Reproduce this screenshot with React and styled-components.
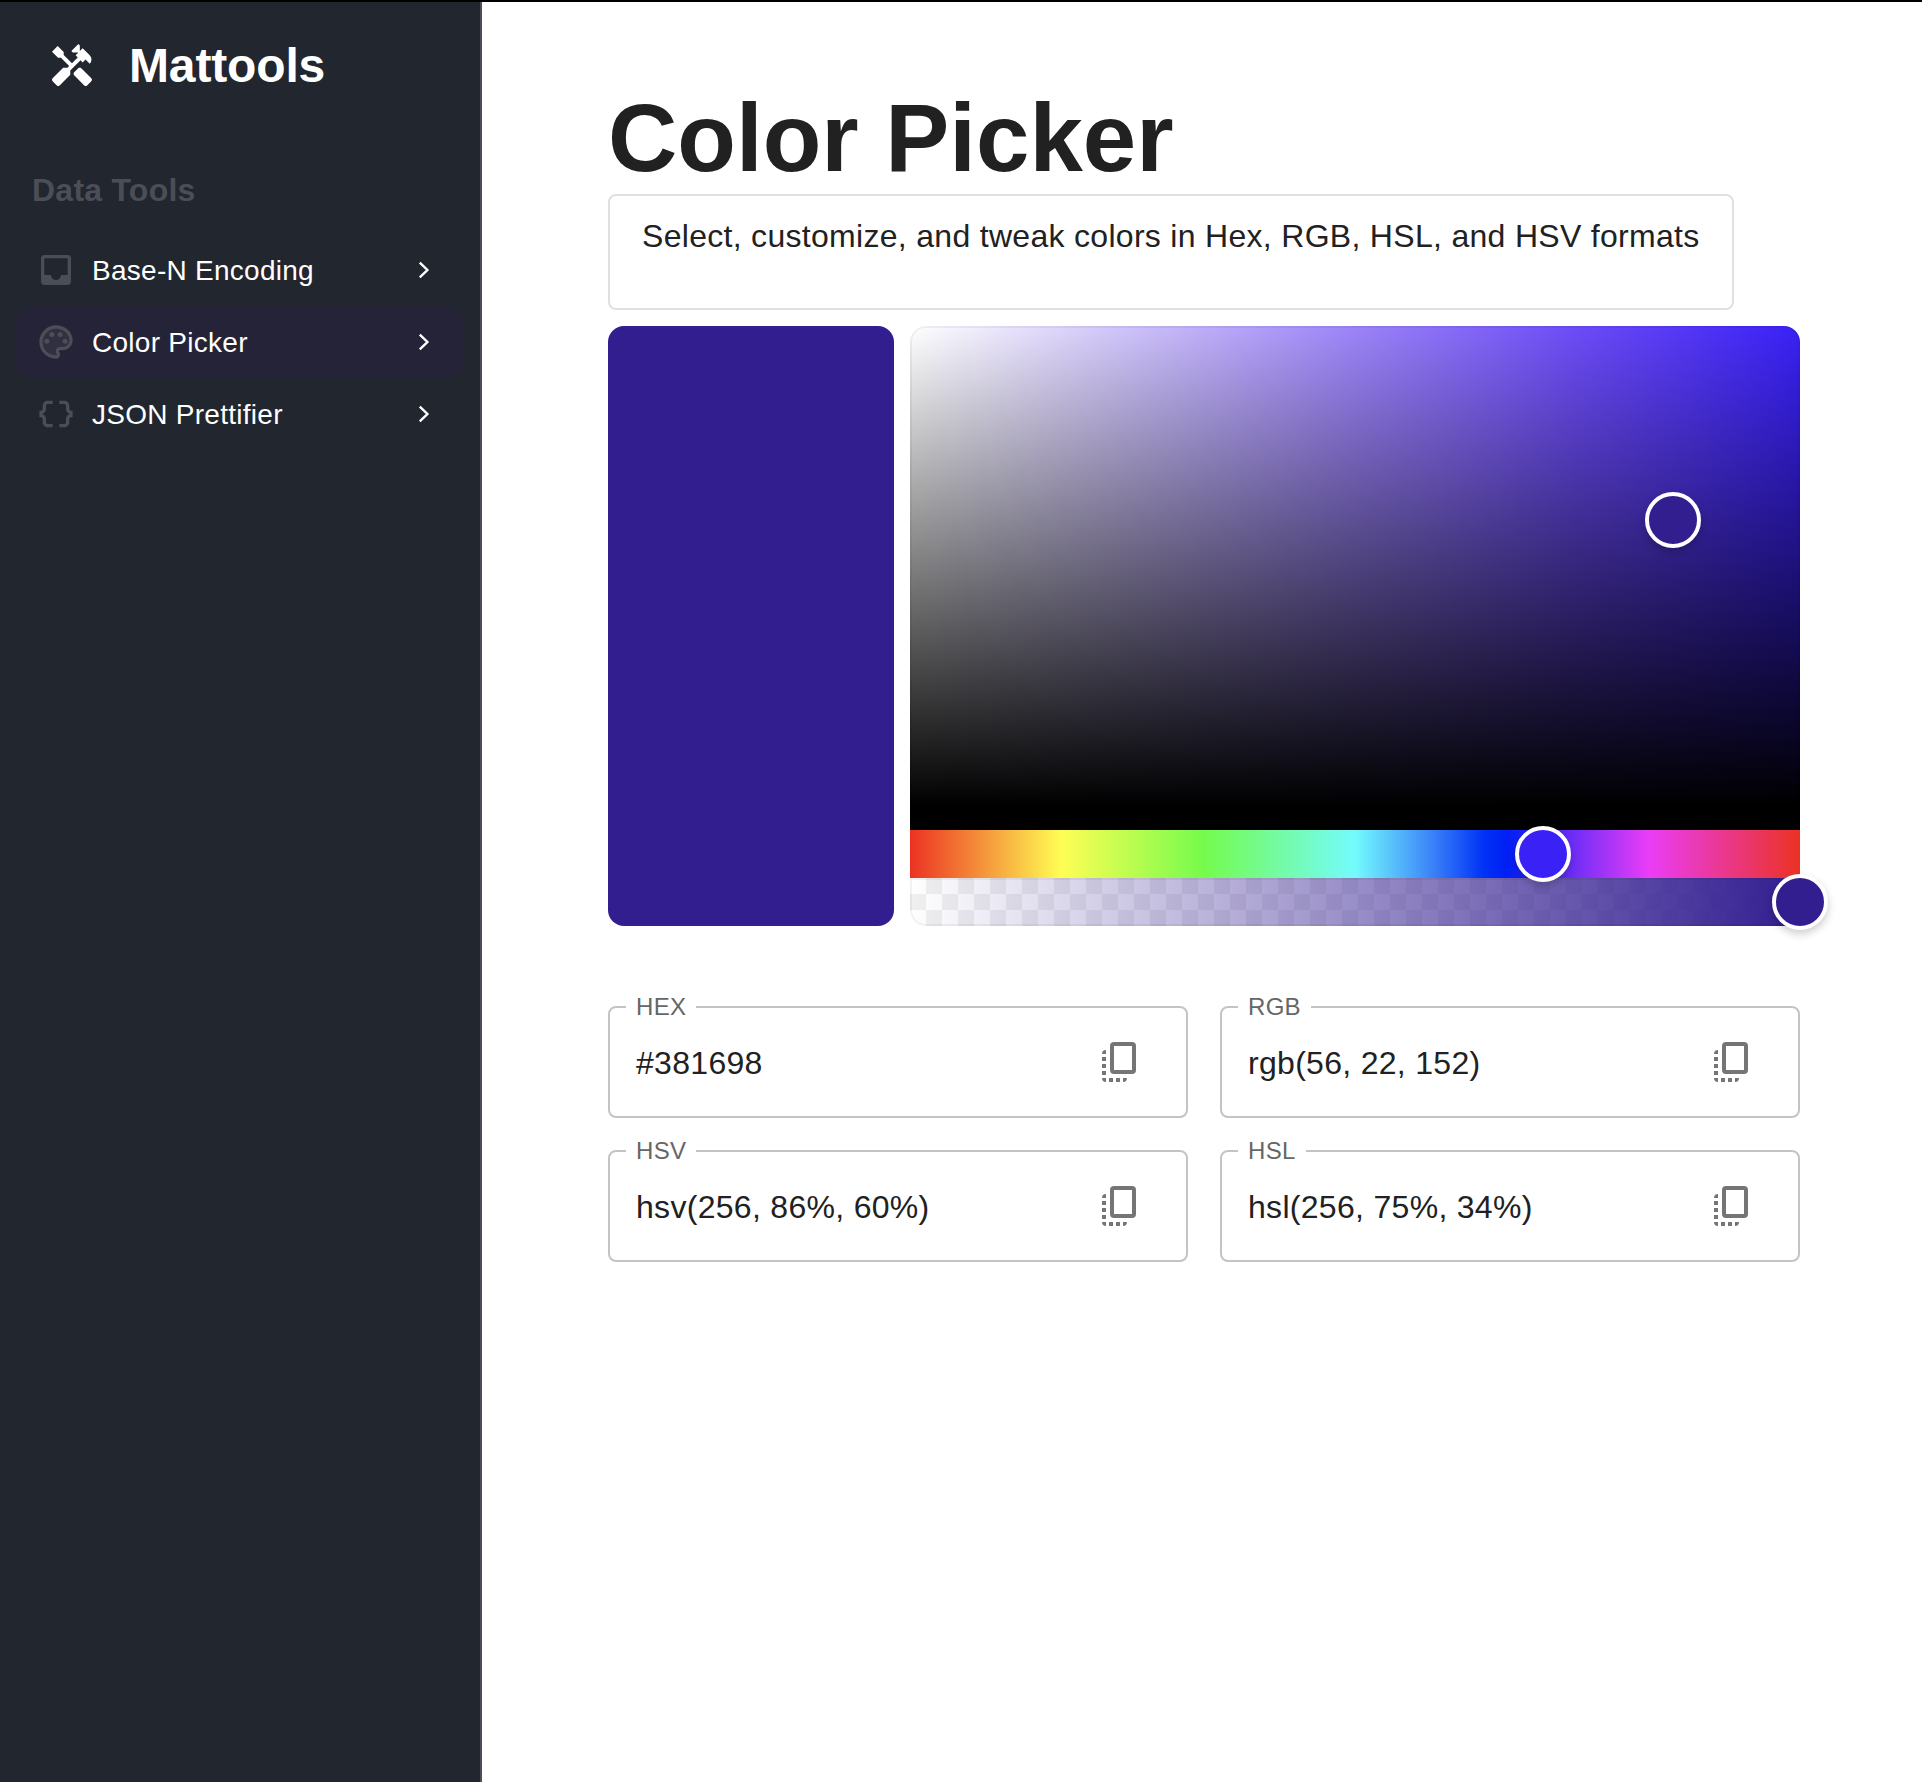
import React from "react";
import styled, { createGlobalStyle } from "styled-components";
import { MdHandyman, MdInbox, MdDataObject } from "react-icons/md";

const GlobalStyle = createGlobalStyle`
  *, *::before, *::after { box-sizing: border-box; }
  body {
    margin: 0;
    background: #fff;
    color: #212121;
    font-family: "Liberation Sans", Arial, sans-serif;
  }
`;

const Page = styled.div`
  display: flex;
  height: 1782px;
  border-top: 2px solid #000;
`;

const Sidebar = styled.aside`
  flex: none;
  width: 482px;
  background: #22262e;
  border-right: 2px solid #4b4e57;
  color: #fff;
`;

const Brand = styled.div`
  display: flex;
  align-items: center;
  height: 128px;
  padding-left: 48px;
  gap: 33px;
`;

const BrandName = styled.span`
  font-size: 48px;
  font-weight: 700;
  letter-spacing: -0.15px;
  line-height: 64px;
`;

const SectionTitle = styled.div`
  margin-top: 28px;
  padding-left: 32px;
  font-size: 32px;
  font-weight: 700;
  letter-spacing: 0.24px;
  line-height: 64px;
  color: #4b4e57;
`;

const Nav = styled.nav`
  display: flex;
  flex-direction: column;
  padding: 12px 16px;
`;

const NavItem = styled.a`
  display: flex;
  align-items: center;
  height: 72px;
  padding: 0 20px;
  border-radius: 16px;
  background: ${(p) => (p.$active ? "#242338" : "transparent")};
  font-size: 28px;
  letter-spacing: 0.27px;

  svg:first-child { color: #4b4e57; }
`;

const NavLabel = styled.span`
  flex: 1;
  margin-left: 16px;
  padding-top: 2px;
`;

const Content = styled.main`
  flex: 1;
  padding: 80px 0 0 126px;
`;

const Title = styled.h1`
  margin: 0;
  height: 112px;
  font-size: 96px;
  font-weight: 700;
  line-height: 112px;
`;

const Description = styled.p`
  width: 1126px;
  height: 116px;
  margin: 0 0 16px;
  padding: 17px 32px;
  border: 2px solid #e0e0e0;
  border-radius: 8px;
  font-size: 32px;
  letter-spacing: 0.3px;
  line-height: 46px;
  white-space: nowrap;
`;

const PickerRow = styled.div`
  display: flex;
  gap: 16px;
`;

const Swatch = styled.div`
  width: 286px;
  height: 600px;
  border-radius: 16px;
  background: #331e90;
`;

const Picker = styled.div`
  width: 890px;
`;

const Saturation = styled.div`
  position: relative;
  height: 504px;
  border-radius: 16px 16px 0 0;
  border-bottom: 24px solid #000;
  background-image: linear-gradient(to top, #000, transparent),
    linear-gradient(
      to right,
      #fff,
      rgb(205, 193, 250) 25%,
      rgb(156, 132, 248) 50%,
      rgb(108, 76, 247) 75%,
      #3a21f6
    );
  box-shadow: inset 0 0 0 2px rgba(0, 0, 0, 0.05);
`;

const HueBar = styled.div`
  position: relative;
  height: 48px;
  background: linear-gradient(
    to right,
    #eb3223 0%,
    #fffe54 17%,
    #75fb4c 33%,
    #73fbfd 50%,
    #3c85f8 58.5%,
    #0032f6 64.5%,
    #001ff5 67%,
    #ea3df7 83%,
    #eb3223 100%
  );
`;

const AlphaBar = styled.div`
  position: relative;
  height: 48px;
  border-radius: 0 0 16px 16px;
  box-shadow: inset 0 0 0 2px rgba(0, 0, 0, 0.05);
  background-image: linear-gradient(to right, rgba(51, 30, 144, 0), #331e90),
    conic-gradient(#f0f0f0 25%, #fff 0 50%, #f0f0f0 0 75%, #fff 0);
  background-size: auto, 32px 32px;
`;

const Handle = styled.span`
  position: absolute;
  left: ${(p) => p.$x}%;
  top: ${(p) => p.$y}%;
  z-index: 1;
  width: 56px;
  height: 56px;
  border: 4px solid #fff;
  border-radius: 50%;
  background: ${(p) => p.$color};
  box-shadow: 0 4px 8px rgba(0, 0, 0, 0.2);
  transform: translate(-50%, -50%);
`;

const Formats = styled.div`
  display: grid;
  grid-template-columns: 580px 580px;
  gap: 21px 32px;
  margin-top: 69px;
`;

const Field = styled.fieldset`
  display: flex;
  align-items: center;
  justify-content: space-between;
  min-width: 0;
  height: 123px;
  margin: 0;
  padding: 0 50px 12px 26px;
  border: 2px solid #c4c4c4;
  border-radius: 8px;
  font-size: 32px;
  letter-spacing: 0.3px;
  color: #212121;

  svg { color: #757575; }
`;

const FieldName = styled.legend`
  height: 24px;
  margin-left: -10px;
  padding: 0 10px;
  font-size: 24px;
  line-height: 24px;
  color: #666;
`;

const FieldValue = styled.span`
  padding-top: 3px;
`;

function PaletteIcon({ size }) {
  return (
    <svg width={size} height={size} viewBox="0 0 24 24" fill="currentColor">
      <path
        opacity=".3"
        d="M12 4c-4.41 0-8 3.59-8 8s3.59 8 8 8c.28 0 .5-.22.5-.5a.54.54 0 0 0-.14-.35c-.41-.46-.63-1.05-.63-1.65a2.5 2.5 0 0 1 2.5-2.5H16c2.21 0 4-1.79 4-4 0-3.86-3.59-7-8-7z"
      />
      <path d="M12 22C6.49 22 2 17.51 2 12S6.49 2 12 2s10 4.04 10 9c0 3.31-2.69 6-6 6h-1.77c-.28 0-.5.22-.5.5 0 .12.05.23.13.33.41.47.64 1.06.64 1.67A2.5 2.5 0 0 1 12 22zm0-18c-4.41 0-8 3.59-8 8s3.59 8 8 8c.28 0 .5-.22.5-.5a.54.54 0 0 0-.14-.35c-.41-.46-.63-1.05-.63-1.65a2.5 2.5 0 0 1 2.5-2.5H16c2.21 0 4-1.79 4-4 0-3.86-3.59-7-8-7z" />
      <circle cx="6.5" cy="11.5" r="1.5" />
      <circle cx="9.5" cy="7.5" r="1.5" />
      <circle cx="14.5" cy="7.5" r="1.5" />
      <circle cx="17.5" cy="11.5" r="1.5" />
    </svg>
  );
}

function ChevronIcon() {
  return (
    <svg width="40" height="40" viewBox="0 0 40 40" fill="none">
      <path d="M15.8 12.6 23.4 20l-7.6 7.4" stroke="currentColor" strokeWidth="2.4" />
    </svg>
  );
}

function CopyIcon() {
  return (
    <svg width="34" height="40" viewBox="0 0 34 40" fill="currentColor">
      <rect x="10" y="2" width="22" height="28" rx="2" fill="none" stroke="currentColor" strokeWidth="4" />
      <path d="M4 8v4H0a4 4 0 0 1 4-4zM0 15h4v4H0zM0 22h4v4H0zM0 29h4v4H0zM4 40v-4H0a4 4 0 0 0 4 4zM7 36h4v4H7zM14 36h4v4h-4zM21 40v-4h4a4 4 0 0 1-4 4z" />
    </svg>
  );
}

const TOOLS = [
  { label: "Base-N Encoding", Icon: MdInbox },
  { label: "Color Picker", Icon: PaletteIcon, active: true },
  { label: "JSON Prettifier", Icon: MdDataObject },
];

const FORMATS = [
  { name: "HEX", value: "#381698" },
  { name: "RGB", value: "rgb(56, 22, 152)" },
  { name: "HSV", value: "hsv(256, 86%, 60%)" },
  { name: "HSL", value: "hsl(256, 75%, 34%)" },
];

export default function App() {
  return (
    <>
      <GlobalStyle />
      <Page>
        <Sidebar>
          <Brand>
            <MdHandyman size={48} />
            <BrandName>Mattools</BrandName>
          </Brand>
          <SectionTitle>Data Tools</SectionTitle>
          <Nav>
            {TOOLS.map(({ label, Icon, active }) => (
              <NavItem key={label} $active={active}>
                <Icon size={40} />
                <NavLabel>{label}</NavLabel>
                <ChevronIcon />
              </NavItem>
            ))}
          </Nav>
        </Sidebar>
        <Content>
          <Title>Color Picker</Title>
          <Description>
            Select, customize, and tweak colors in Hex, RGB, HSL, and HSV formats
          </Description>
          <PickerRow>
            <Swatch />
            <Picker>
              <Saturation>
                <Handle $x={85.7} $y={40.4} $color="#331e90" />
              </Saturation>
              <HueBar>
                <Handle $x={71.1} $y={50} $color="#3a21f6" />
              </HueBar>
              <AlphaBar>
                <Handle $x={100} $y={50} $color="#331e90" />
              </AlphaBar>
            </Picker>
          </PickerRow>
          <Formats>
            {FORMATS.map(({ name, value }) => (
              <Field key={name}>
                <FieldName>{name}</FieldName>
                <FieldValue>{value}</FieldValue>
                <CopyIcon />
              </Field>
            ))}
          </Formats>
        </Content>
      </Page>
    </>
  );
}
